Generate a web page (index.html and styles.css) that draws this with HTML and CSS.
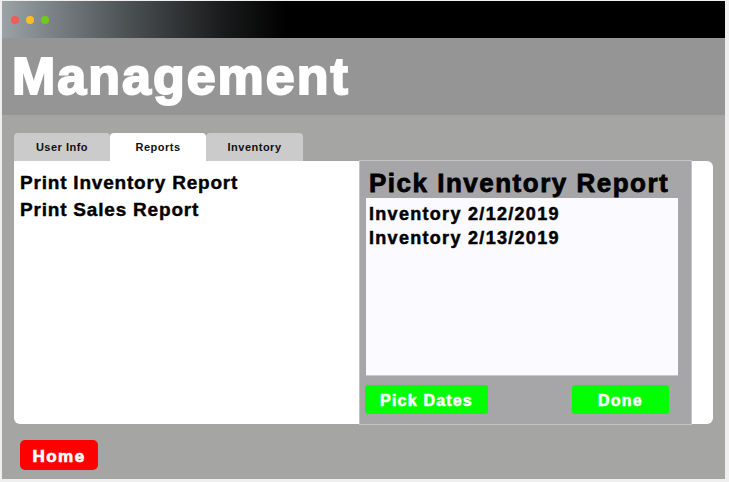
FILE: index.html
```html
<!DOCTYPE html>
<html lang="en">
<head>
<meta charset="UTF-8">
<title>Management</title>
<link rel="stylesheet" href="styles.css">
</head>
<body>
    <div class="window">
        <!-- title bar -->
        <div class="titlebar">
            <span class="dot red"></span>
            <span class="dot yellow"></span>
            <span class="dot green"></span>
        </div>

        <div class="header">
            <h1>Management</h1>
        </div>

        <div class="content">
            <div class="tabs">
                <div class="tab">User Info</div>
                <div class="tab active">Reports</div>
                <div class="tab">Inventory</div>
            </div>

            <div class="panel">
                <div class="report-list">
                    <p>Print Inventory Report</p>
                    <p>Print Sales Report</p>
                </div>

                <div class="picker">
                    <h2>Pick Inventory Report</h2>
                    <div class="picker-list">
                        <p>Inventory 2/12/2019</p>
                        <p>Inventory 2/13/2019</p>
                    </div>
                    <div class="picker-buttons">
                        <button class="btn-green btn-dates">Pick Dates</button>
                        <button class="btn-green btn-done">Done</button>
                    </div>
                </div>
            </div>

            <button class="btn-home">Home</button>
        </div>
    </div>
</body>
</html>
```

FILE: styles.css
```css
body {
    margin: 0;
    padding: 1px 0 0 2px;
    background-color: #efefef;
    font-family: "Liberation Sans", Arial, sans-serif;
}

.window {
    width: 723px;
    height: 478px;
    display: flex;
    flex-direction: column;
    background-color: #a5a5a4;
}

/* title bar */
.titlebar {
    height: 37px;
    display: flex;
    align-items: center;
    gap: 7px;
    padding-left: 9px;
    background: linear-gradient(to right, #9ba3a7 0%, #4f5457 120px, #1a1b1c 220px, #000 285px);
}

.dot {
    width: 8px;
    height: 8px;
    border-radius: 50%;
}
.dot.red { background-color: #f25b57; }
.dot.yellow { background-color: #f9bd27; }
.dot.green { background-color: #6ccc1b; }

.header {
    height: 77px;
    background-color: #959595;
    padding-left: 10px;
}

.header h1 {
    margin: 0;
    font-size: 52px;
    line-height: 77px;
    letter-spacing: 2px;
    color: #fff;
    font-weight: bold;
    -webkit-text-stroke: 2px #fff; /* heavier face */
}

.content {
    padding: 18px 12px 0 12px;
}

/* tabs */
.tabs {
    display: flex;
    height: 28px;
}

.tab {
    width: 96px;
    background-color: #cbcbcb;
    border-radius: 4px 4px 0 0;
    font-size: 11px;
    font-weight: bold;
    letter-spacing: 0.5px;
    text-align: center;
    line-height: 28px;
    color: #111;
}
.tab:last-child { width: 97px; }

.tab.active {
    background-color: #fff;
}

/* main panel */
.panel {
    width: 699px;
    height: 263px;
    display: flex;
    background-color: #fff;
    border-radius: 0 6px 6px 6px;
}

.report-list {
    width: 345px;
    box-sizing: border-box;
    padding: 8px 6px 0 6px;
}

.report-list p {
    margin: 0;
    font-size: 19px;
    line-height: 27px;
    font-weight: bold;
    letter-spacing: 0.8px;
    color: #000;
    -webkit-text-stroke: 0.4px #000;
}

.picker {
    width: 333px;
    height: 265px;
    margin-top: -1px;
    box-sizing: border-box;
    border: 1px solid #c4c4c6;
    background-color: #a6a6a8;
    padding: 8px 0 0 6px;
}

.picker h2 {
    margin: 0 0 0 3px;
    font-size: 26px;
    line-height: 29px;
    letter-spacing: 1.5px;
    color: #000;
    -webkit-text-stroke: 0.8px #000;
}

.picker-list {
    width: 312px;
    height: 178px;
    box-sizing: border-box;
    background-color: #fbfaff;
    border-bottom: 1px solid #c9c9cc;
    padding: 4px 0 0 3px;
}

.picker-list p {
    margin: 0;
    font-size: 18px;
    line-height: 24px;
    font-weight: bold;
    letter-spacing: 1.3px;
    color: #000;
    -webkit-text-stroke: 0.5px #000;
}

.picker-buttons {
    display: flex;
    justify-content: space-between;
    width: 304px;
    margin-top: 9px;
    margin-left: -1px;
}

.btn-green {
    height: 29px;
    border: none;
    border-radius: 3px;
    background-color: #00ff00;
    color: #fff;
    font-family: "Liberation Sans", Arial, sans-serif;
    font-size: 16px;
    font-weight: bold;
    letter-spacing: 1.2px;
    padding: 2px 0 0 0;
    -webkit-text-stroke: 0.6px #fff;
}
.btn-dates { width: 123px; }
.btn-done { width: 97px; }

.btn-home {
    display: block;
    width: 78px;
    height: 30px;
    margin: 16px 0 0 6px;
    border: none;
    border-radius: 5px;
    background-color: #ff0000;
    color: #fff;
    font-family: "Liberation Sans", Arial, sans-serif;
    font-size: 17px;
    font-weight: bold;
    letter-spacing: 1.5px;
    padding: 3px 0 0 0;
    -webkit-text-stroke: 0.7px #fff;
}
```
